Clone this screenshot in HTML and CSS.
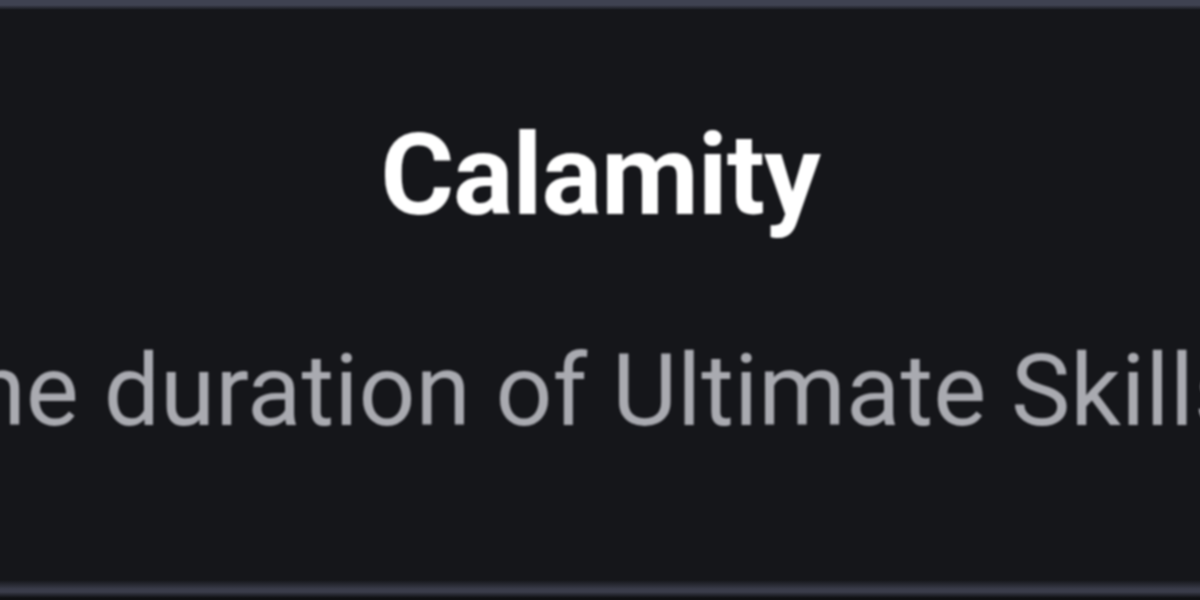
FILE: index.html
```html
<!DOCTYPE html>
<html lang="en">
<head>
    <meta charset="UTF-8">
    <meta name="viewport" content="width=device-width, initial-scale=1.0">
    <title>Calamity</title>
    <link rel="stylesheet" href="styles.css">
</head>
<body>
    <div class="tooltip">
        <div class="top-edge"></div>
        <div class="body">
            <h1 class="title">Calamity</h1>
            <p class="desc">the duration of Ultimate Skills</p>
        </div>
        <div class="bottom-edge"></div>
    </div>
</body>
</html>
```

FILE: styles.css
```css
html, body{
    margin: 0;
    padding: 0;
    background: #0f1013;
}
.tooltip{
    width: 1200px;
    height: 600px;
    display: flex;
    flex-direction: column;
    background: #15161a;
    overflow: hidden;
}
.top-edge{
    height: 10px;
    background: linear-gradient(#3f4251 0, #3f4251 5px, #15161a 10px);
}
.body{
    flex: 1;
    display: flex;
    flex-direction: column;
    align-items: center;
    filter: blur(1px);
}
.title{
    margin: 96px 0 0 0;
    font-family: Roboto, "Liberation Sans", sans-serif;
    font-weight: 700;
    font-size: 113px;
    line-height: 140px;
    color: #ffffff;
    letter-spacing: -1px;
}
/* the line is wider than the panel, so it is cut on both sides */
.desc{
    align-self: flex-start;
    margin: 85px 0 0 -62px;
    font-family: Roboto, "Liberation Sans", sans-serif;
    font-size: 100px;
    line-height: 120px;
    color: #a9aab0;
    white-space: nowrap;
}
.bottom-edge{
    height: 20px;
    background: linear-gradient(#15161a 0, #3a3c4a 9px, #3a3c4a 12px, #0f1013 18px);
}
```
